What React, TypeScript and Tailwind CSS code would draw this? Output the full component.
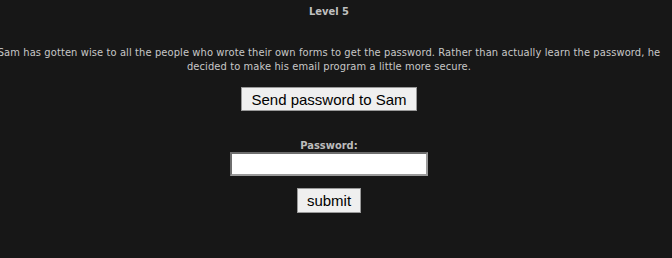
export default function App() {
  return (
    <div className="min-h-[258px] w-full bg-[#171717] font-['DejaVu_Sans_Condensed','DejaVu_Sans',sans-serif] text-[11px] text-[#c8c8c8]">
      <div className="flex w-[658px] flex-col items-center pt-[5px]">
        <h1 className="text-[11px] font-bold leading-[14px] text-[#c0c0c0]">Level 5</h1>

        {/* intro text: first line is wider than the window and runs off the left edge */}
        <div className="mt-[27px] flex flex-col items-center leading-[14px] tracking-[0.11px]">
          <p className="whitespace-nowrap">
            Sam has gotten wise to all the people who wrote their own forms to get the password. Rather than actually learn the password, he
          </p>
          <p className="whitespace-nowrap">decided to make his email program a little more secure.</p>
        </div>

        <button className="mt-[13px] h-[24px] border border-[#999] bg-[#efefef] px-[9px] font-['Liberation_Sans',Arial,sans-serif] text-[15px] leading-none text-black">
          Send password to Sam
        </button>

        <label className="mt-[29px] font-bold leading-[12px] text-[#bcbcbc]">Password:</label>
        <input
          type="password"
          className="h-[24px] w-[198px] border-2 border-t-[#6e6e6e] border-l-[#6e6e6e] border-b-[#9a9a9a] border-r-[#9a9a9a] bg-white outline-none"
        />

        <button className="mt-[12px] h-[25px] border border-[#999] bg-[#efefef] px-[9px] font-['Liberation_Sans',Arial,sans-serif] text-[15px] leading-none text-black">
          submit
        </button>
      </div>
    </div>
  );
}
